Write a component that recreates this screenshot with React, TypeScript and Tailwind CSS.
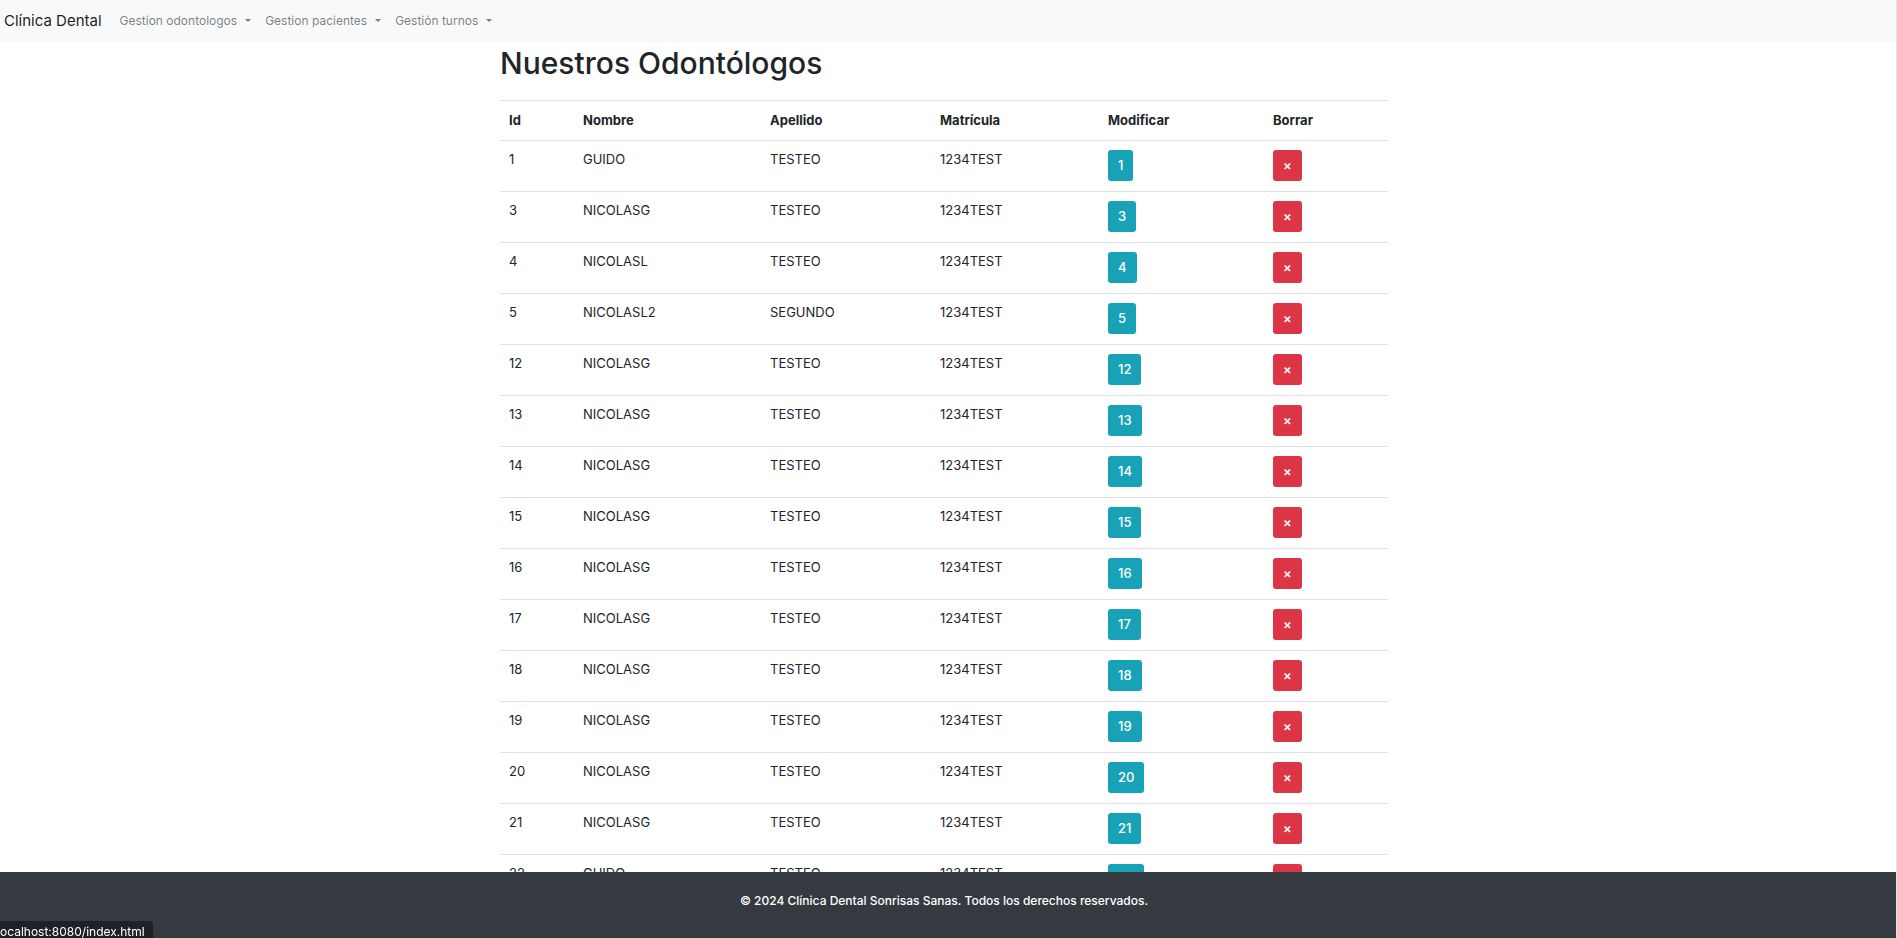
type Odontologo = { id: number; nombre: string; apellido: string; matricula: string };

const menus = ["Gestion odontologos", "Gestion pacientes", "Gestión turnos"];

const columnas = [
  { titulo: "Id", ancho: "w-[74px]" },
  { titulo: "Nombre", ancho: "w-[187px]" },
  { titulo: "Apellido", ancho: "w-[170px]" },
  { titulo: "Matrícula", ancho: "w-[168px]" },
  { titulo: "Modificar", ancho: "w-[165px]" },
  { titulo: "Borrar", ancho: "w-[124px]" },
];

const fila = (id: number, nombre = "NICOLASG", apellido = "TESTEO"): Odontologo => ({
  id,
  nombre,
  apellido,
  matricula: "1234TEST",
});

const odontologos: Odontologo[] = [
  fila(1, "GUIDO"),
  fila(3),
  fila(4, "NICOLASL"),
  fila(5, "NICOLASL2", "SEGUNDO"),
  fila(12),
  fila(13),
  fila(14),
  fila(15),
  fila(16),
  fila(17),
  fila(18),
  fila(19),
  fila(20),
  fila(21),
  fila(22, "GUIDO"),
];

function Navbar() {
  return (
    <nav className="flex h-[43px] shrink-0 items-center bg-[#f8f9fa] pb-[2px] pl-1">
      <a href="#" className="mr-[11px] text-[15px] leading-6 text-black/90">
        Clínica Dental
      </a>
      <ul className="flex">
        {menus.map((menu) => (
          <li key={menu}>
            <button
              type="button"
              aria-haspopup="true"
              className="flex cursor-pointer items-center gap-2 px-[7px] text-xs leading-5 text-black/50"
            >
              {menu}
              <span className="border-x-[3px] border-t-[3px] border-x-transparent border-t-current" />
            </button>
          </li>
        ))}
      </ul>
    </nav>
  );
}

function Tabla() {
  return (
    <table className="w-full table-fixed border-t border-[#dee2e6]">
      <thead>
        <tr className="h-10">
          {columnas.map((c) => (
            <th key={c.titulo} scope="col" className={`${c.ancho} px-[9px] text-left font-bold`}>
              {c.titulo}
            </th>
          ))}
        </tr>
      </thead>
      <tbody>
        {odontologos.map((o) => (
          <tr key={o.id} className="h-[51px] border-t border-[#dee2e6] align-top">
            <td className="px-[9px] pt-[9px]">{o.id}</td>
            <td className="px-[9px] pt-[9px]">{o.nombre}</td>
            <td className="px-[9px] pt-[9px]">{o.apellido}</td>
            <td className="px-[9px] pt-[9px]">{o.matricula}</td>
            <td className="px-[9px] pt-[9px]">
              <button
                type="button"
                aria-label={`Modificar ${o.id}`}
                className="block h-[31px] cursor-pointer rounded-[3px] bg-[#17a2b8] px-2.5 font-medium text-white"
              >
                {o.id}
              </button>
            </td>
            <td className="px-[9px] pt-[9px]">
              <button
                type="button"
                aria-label={`Borrar ${o.id}`}
                className="block h-[31px] cursor-pointer rounded-[3px] bg-[#dc3545] px-2.5 font-semibold text-white"
              >
                ×
              </button>
            </td>
          </tr>
        ))}
      </tbody>
    </table>
  );
}

export default function App() {
  return (
    <div className="flex h-screen flex-col border-r border-[#e3e3e3] bg-white font-['Inter','Noto_Sans',sans-serif] text-[13px] leading-[19px] text-[#212529]">
      <Navbar />
      <main className="min-h-0 flex-1 overflow-y-auto pr-2 [scrollbar-width:none]">
        <div className="mx-auto max-w-[912px] px-3">
          <h1 className="mb-4 text-[30px] leading-[41px] font-medium">Nuestros Odontólogos</h1>
          <Tabla />
        </div>
      </main>
      <footer className="h-[66px] shrink-0 bg-[#343a40] pt-[19px] pr-2 text-center text-xs leading-[19px] font-medium text-white">
        <p>© 2024 Clínica Dental Sonrisas Sanas. Todos los derechos reservados.</p>
      </footer>
      <div className="fixed bottom-0 left-0 h-[17px] rounded-tr-[4px] bg-[#202124] pr-2 text-xs leading-[21px] text-white">
        ocalhost:8080/index.html
      </div>
    </div>
  );
}
